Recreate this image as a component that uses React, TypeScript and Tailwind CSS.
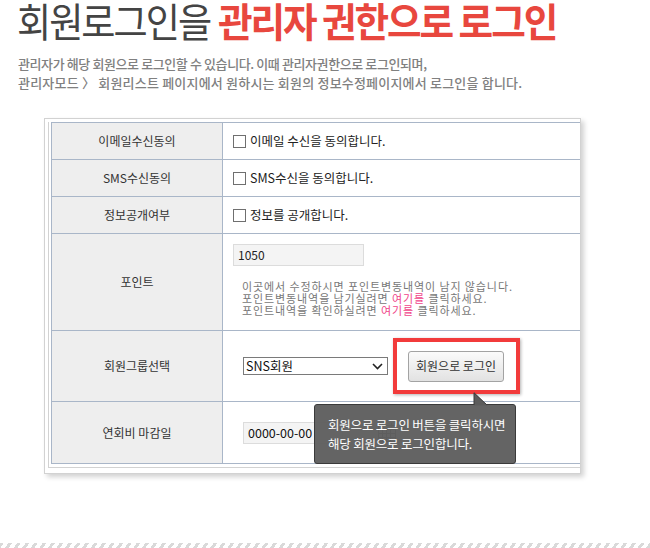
const line = 'border-[#a9b6c8]';

function Check() {
  return <span className="inline-block w-[13px] h-[13px] border border-[#6f6f6f] bg-white" />;
}

function Row({ label, h, children }: { label: string; h: string; children: React.ReactNode }) {
  return (
    <div className={`flex border-b ${line} ${h}`}>
      <div className={`w-[171px] shrink-0 flex items-center justify-center bg-[#eeeeee] border-r ${line} text-[12px] text-[#333]`}>
        {label}
      </div>
      <div className="flex-1 min-w-0">{children}</div>
    </div>
  );
}

function CheckCell({ text }: { text: string }) {
  return (
    <div className="h-full flex items-center gap-[4px] pl-[10px] text-[12.5px] text-[#222]">
      <Check />
      <span>{text}</span>
    </div>
  );
}

function Calendar() {
  return (
    <svg width="20" height="21" viewBox="0 0 20 21" fill="none" stroke="#8a8a8a" strokeWidth="1">
      <rect x="1.5" y="3.5" width="17" height="16" />
      <path d="M1.5 7.5h17M1.5 11.5h17M1.5 15.5h17M5.5 7.5v12M9.5 7.5v12M13.5 7.5v12" />
      <path d="M5.5 1v4M14.5 1v4" />
    </svg>
  );
}

export default function App() {
  return (
    <div className="relative w-[650px] h-[548px] bg-white overflow-hidden flex flex-col font-['Noto_Sans_CJK_KR',sans-serif]">
      {/* header */}
      <h1 className="pl-[17px] text-[40px] leading-[40px] text-[#444444] whitespace-nowrap">
        <span className="inline-block origin-left scale-x-[0.93] tracking-[-0.055em]">회원로그인을</span>
        <span className="inline-block origin-left scale-x-[0.94] tracking-[-0.055em] font-bold text-[#e8473e] -ml-[7px]">관리자 권한으로 로그인</span>
      </h1>
      <div className="pl-[18px] mt-[14px] text-[13px] leading-[19px] text-[#808080] font-medium whitespace-nowrap">
        <p className="tracking-[-0.4px]">관리자가 해당 회원으로 로그인할 수 있습니다. 이때 관리자권한으로 로그인되며,</p>
        <p className="tracking-[0.2px]">관리자모드 〉 회원리스트 페이지에서 원하시는 회원의 정보수정페이지에서 로그인을 합니다.</p>
      </div>

      {/* captured admin form */}
      <div className="ml-[44px] mt-[26px] w-[537px] border border-[#d2d2d2] pt-[3px] pl-[3px] pb-[5px] shadow-[3px_3px_5px_rgba(0,0,0,0.18)]">
        <div className="border-l border-b border-[#d2d2d2] pl-[2px] pb-[3px]">
          <div className={`border-l border-t ${line}`}>
            <Row label="이메일수신동의" h="h-[37px]">
              <CheckCell text="이메일 수신을 동의합니다." />
            </Row>
            <Row label="SMS수신동의" h="h-[37px]">
              <CheckCell text="SMS수신을 동의합니다." />
            </Row>
            <Row label="정보공개여부" h="h-[37px]">
              <CheckCell text="정보를 공개합니다." />
            </Row>
            <Row label="포인트" h="h-[97px]">
              <div className="pl-[10px] pt-[10px]">
                <div className="w-[131px] h-[22px] bg-[#f4f4f4] border border-[#dcdcdc] pl-[4px] text-[12px] leading-[20px] text-[#222]">1050</div>
                <div className="ml-[9px] mt-[14px] text-[11px] leading-[12px] tracking-[0.9px] text-[#777] whitespace-nowrap">
                  <p>이곳에서 수정하시면 포인트변동내역이 남지 않습니다.</p>
                  <p>포인트변동내역을 남기실려면 <span className="text-[#f0458a]">여기를</span> 클릭하세요.</p>
                  <p>포인트내역을 확인하실려면 <span className="text-[#f0458a]">여기를</span> 클릭하세요.</p>
                </div>
              </div>
            </Row>
            <Row label="회원그룹선택" h="h-[71px]">
              <div className="h-full flex items-center pl-[20px]">
                <div className="w-[145px] h-[18px] border border-[#7a7a7a] bg-white flex items-center justify-between pl-[2px] pr-[4px] text-[12.5px] text-[#111]">
                  <span>SNS회원</span>
                  <svg width="11" height="7" viewBox="0 0 11 7" fill="none" stroke="#222" strokeWidth="1.6">
                    <path d="M1 1l4.5 4.5L10 1" />
                  </svg>
                </div>
                <div className="ml-[5px] w-[127px] h-[56px] border-[4px] border-[#f23b3b] shadow-[1px_1px_3px_rgba(0,0,0,0.3)] flex items-center justify-center pr-[1px]">
                  <button className="w-[96px] h-[31px] rounded-[3px] border border-[#a3a3a3] bg-gradient-to-b from-[#fbfbfb] to-[#e2e2e2] text-[12px] text-[#333]">
                    회원으로 로그인
                  </button>
                </div>
              </div>
            </Row>
            <Row label="연회비 마감일" h="h-[62px]">
              <div className="h-full flex items-center pl-[20px]">
                <div className="w-[100px] h-[22px] bg-[#f4f4f4] border border-[#dcdcdc] pl-[4px] text-[12.5px] leading-[20px] text-[#111]">0000-00-00</div>
                <div className="ml-[34px]"><Calendar /></div>
              </div>
            </Row>
          </div>
        </div>
      </div>

      {/* tooltip */}
      <div className="absolute left-[314px] top-[404px] w-[202px] h-[60px] rounded-[3px] border border-[#3a3a3a] bg-[#5c5c5c]/95 pl-[13px] pt-[10px] text-[12.5px] leading-[19px] tracking-[-0.2px] text-white whitespace-nowrap">
        <p>회원으로 로그인 버튼을 클릭하시면</p>
        <p>해당 회원으로 로그인합니다.</p>
      </div>
      <svg className="absolute left-[473px] top-[392px]" width="16" height="14" viewBox="0 0 16 14">
        <path d="M1 13.5V0.5L14.5 13.5Z" fill="#5c5c5c" />
        <path d="M1 13V0.8L14 13" fill="none" stroke="#3a3a3a" strokeWidth="1" />
      </svg>

      {/* bottom hatch */}
      <div className="mt-auto h-[5px] bg-[repeating-linear-gradient(125deg,#d9d9d9_0_3px,transparent_3px_7px)]" />
    </div>
  );
}
